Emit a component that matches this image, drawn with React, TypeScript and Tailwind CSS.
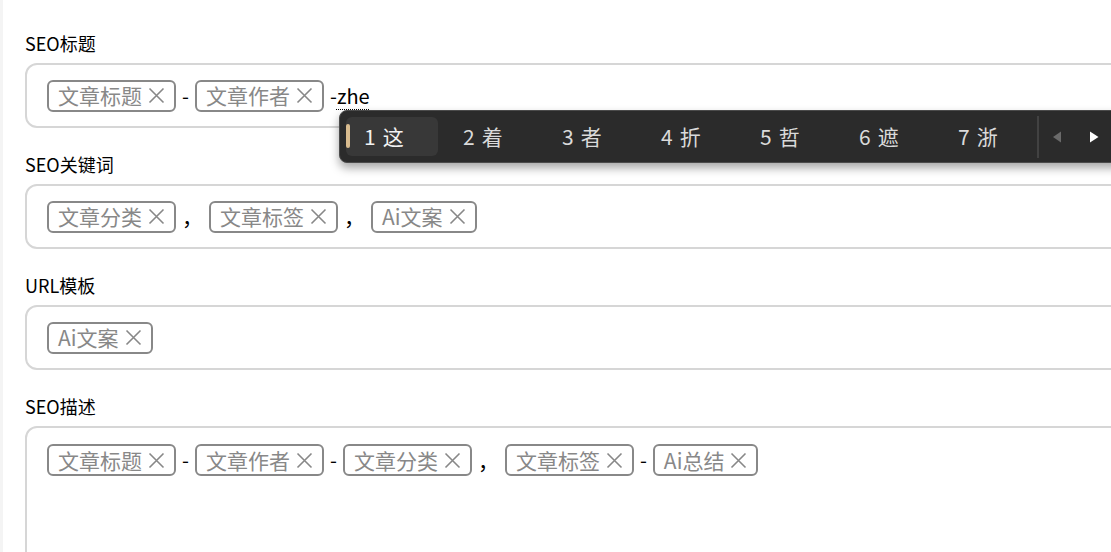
import React from 'react';

type Part = { tag?: string; sep?: string };

const font = { fontFamily: '"Noto Sans CJK SC", "Noto Sans", sans-serif' };

function Cross() {
    return (
        <svg width="17" height="17" viewBox="0 0 17 17" className="ml-[6px] shrink-0">
            <path d="M1.5 1.5 L15.5 15.5 M15.5 1.5 L1.5 15.5" stroke="#888" strokeWidth="1.6" fill="none" />
        </svg>
    );
}

function Tag({ label }: { label: string }) {
    return (
        <span className="inline-flex items-center h-8 box-border border-2 border-[#888] rounded-[6px] pl-[9px] pr-[9px] text-[21px] leading-none text-[#888] shrink-0">
            {label}
            <Cross />
        </span>
    );
}

function Sep({ ch }: { ch: string }) {
    if (ch === ',') {
        return <span className="mx-[6px] w-[21px] text-[21px] leading-none text-black">，</span>;
    }
    return <span className="mx-[6px] text-[20px] leading-none text-black">{ch}</span>;
}

function Field({ label, parts, tall, children }: { label: string; parts: Part[]; tall?: boolean; children?: React.ReactNode }) {
    return (
        <div className="mb-[24px]">
            <div className="text-[18px] leading-6 text-black mb-2">{label}</div>
            <div
                className={
                    tall
                        ? 'relative box-border border-2 border-[#d6d6d6] rounded-[12px] h-[160px] pl-[20px] pt-4 -mr-[30px] flex items-start'
                        : 'relative box-border border-2 border-[#d6d6d6] rounded-[12px] h-[65px] pl-[20px] -mr-[30px] flex items-center'
                }
            >
                <div className="flex items-center">
                    {parts.map((p, i) => (p.tag ? <Tag key={i} label={p.tag} /> : <Sep key={i} ch={p.sep!} />))}
                    {children}
                </div>
            </div>
        </div>
    );
}

const candidates = ['这', '着', '者', '折', '哲', '遮', '浙'];

function Candidates() {
    return (
        <div className="absolute left-[312px] top-[45px] w-[820px] h-[53px] box-border bg-[#2b2b2b] border border-[#4b4b4b] rounded-[8px] shadow-[0_5px_10px_rgba(0,0,0,0.35)] flex items-center pl-[6px] z-10">
            {candidates.map((c, i) => (
                <div
                    key={c}
                    className={
                        i === 0
                            ? 'relative w-[92px] h-[39px] mr-[7px] rounded-[6px] bg-[#383838] flex items-center pl-[18px] text-[21px] text-[#f2f2f2] shrink-0'
                            : 'relative w-[92px] h-[39px] mr-[7px] rounded-[6px] flex items-center pl-[18px] text-[21px] text-[#dadada] shrink-0'
                    }
                >
                    {i === 0 && <span className="absolute left-0 top-[7px] w-[4px] h-[24px] rounded-full bg-[#d8bb8e]" />}
                    <span>{i + 1}</span>
                    <span className="ml-[7px]">{c}</span>
                </div>
            ))}
            <div className="w-[2px] h-[42px] bg-[#424242] -ml-[2px] shrink-0" />
            <svg width="10" height="12" viewBox="0 0 10 12" className="ml-[13px] shrink-0">
                <path d="M9 0.5 L9 11.5 L1 6 Z" fill="#6a6a6a" />
            </svg>
            <svg width="10" height="12" viewBox="0 0 10 12" className="ml-[27px] shrink-0">
                <path d="M1 0.5 L1 11.5 L9.5 6 Z" fill="#ffffff" />
            </svg>
        </div>
    );
}

export default function App() {
    return (
        <div className="w-[1111px] h-[552px] overflow-hidden bg-white border-l-[3px] border-[#f4f4f4] box-border" style={font}>
            <div className="pl-[22px] pt-[31px]">
                <Field label="SEO标题" parts={[{ tag: '文章标题' }, { sep: '-' }, { tag: '文章作者' }]}>
                    <span className="ml-[6px] text-[20px] leading-none text-black">-</span>
                    <span className="text-[20px] leading-none text-black underline decoration-dotted underline-offset-[5px] decoration-1">zhe</span>
                    <Candidates />
                </Field>
                <Field label="SEO关键词" parts={[{ tag: '文章分类' }, { sep: ',' }, { tag: '文章标签' }, { sep: ',' }, { tag: 'Ai文案' }]} />
                <Field label="URL模板" parts={[{ tag: 'Ai文案' }]} />
                <Field
                    label="SEO描述"
                    tall
                    parts={[
                        { tag: '文章标题' }, { sep: '-' }, { tag: '文章作者' }, { sep: '-' }, { tag: '文章分类' },
                        { sep: ',' }, { tag: '文章标签' }, { sep: '-' }, { tag: 'Ai总结' },
                    ]}
                />
            </div>
        </div>
    );
}
